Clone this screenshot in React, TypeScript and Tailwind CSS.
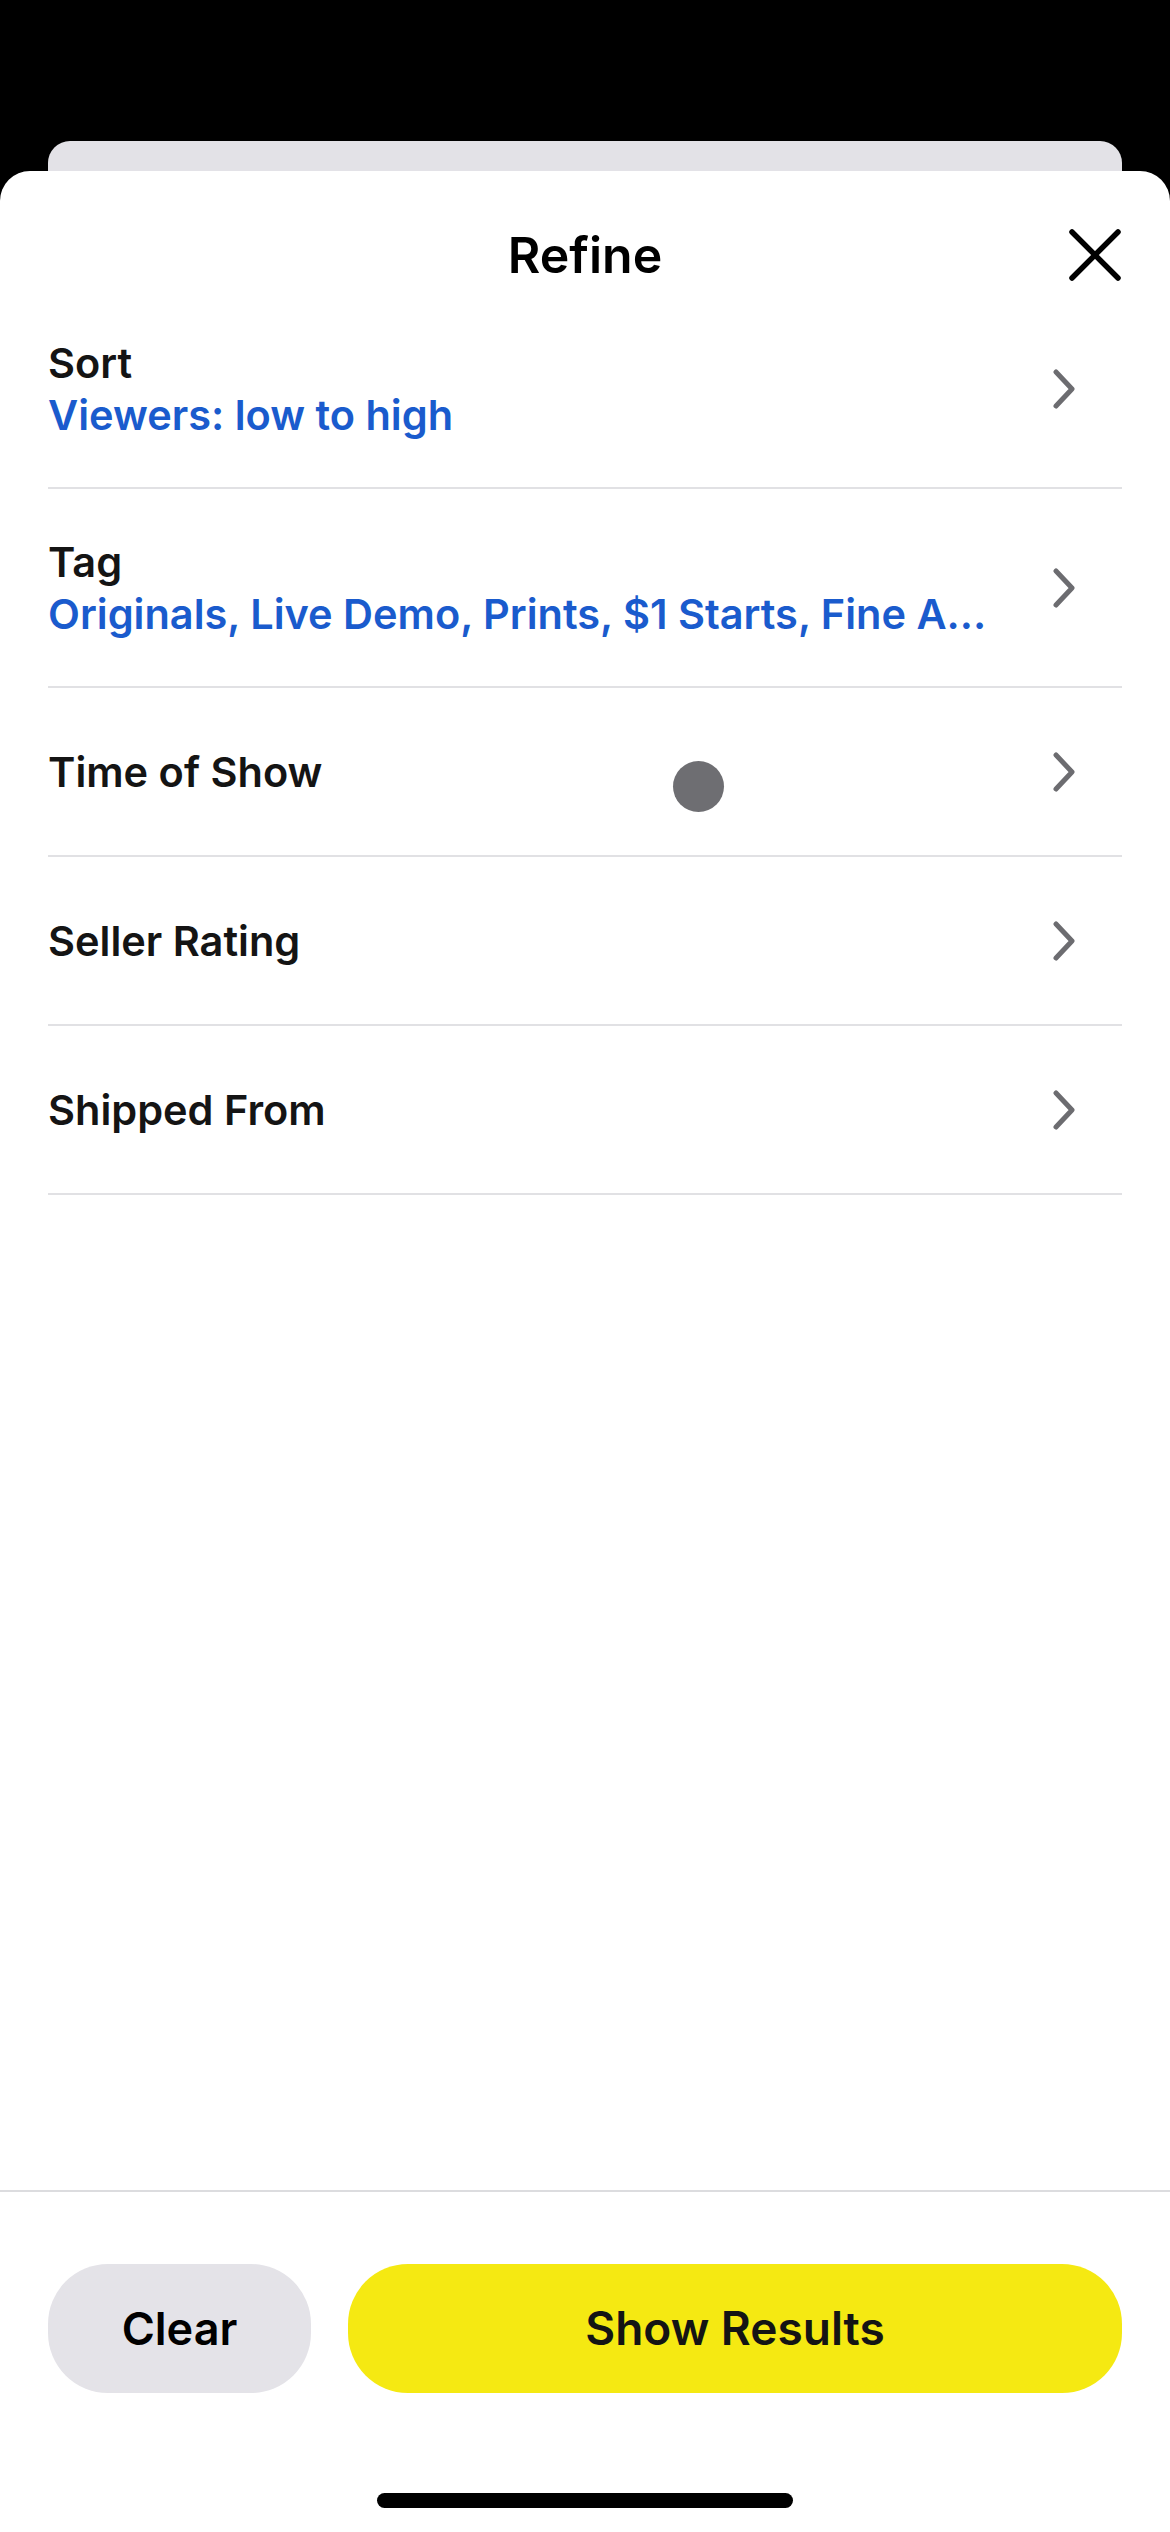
type Row = {
  title: string;
  value?: string;
};

const rows: Row[] = [
  { title: "Sort", value: "Viewers: low to high" },
  { title: "Tag", value: "Originals, Live Demo, Prints, $1 Starts, Fine A..." },
  { title: "Time of Show" },
  { title: "Seller Rating" },
  { title: "Shipped From" },
];

function Chevron() {
  return (
    <svg width="24" height="40" viewBox="0 0 24 40" fill="none" className="shrink-0">
      <path
        d="M4 3 L20 20 L4 37"
        stroke="#6c6c70"
        strokeWidth="5"
        strokeLinecap="round"
        strokeLinejoin="round"
      />
    </svg>
  );
}

function CloseIcon() {
  return (
    <svg width="52" height="52" viewBox="0 0 52 52" fill="none">
      <path
        d="M3 3 L49 49 M49 3 L3 49"
        stroke="#000"
        strokeWidth="5.5"
        strokeLinecap="round"
      />
    </svg>
  );
}

function FilterRow({ row }: { row: Row }) {
  return (
    <div
      className={`relative flex items-center justify-between border-b-2 border-[#e1e1e4] ${
        row.value ? "h-[199px]" : "h-[169px]"
      }`}
    >
      <div className="flex flex-col min-w-0 pr-6">
        <span className="text-[41.5px] leading-[52px] font-semibold text-[#141414]">
          {row.title}
        </span>
        {row.value && (
          <span className="text-[41.5px] leading-[52px] font-semibold text-[#1a5bcd] truncate">
            {row.value}
          </span>
        )}
      </div>
      <div className="mr-[46px]">
        <Chevron />
      </div>
      {row.title === "Time of Show" && (
        /* touch indicator */
        <div className="absolute left-[625px] top-[73px] w-[51px] h-[51px] rounded-full bg-[#6e6e72]" />
      )}
    </div>
  );
}

export default function App() {
  return (
    <div
      className="w-[1170px] h-[2532px] bg-black flex flex-col overflow-hidden"
      style={{ fontFamily: "Inter, 'Noto Sans', sans-serif" }}
    >
      <div className="h-[141px] shrink-0" />
      {/* card behind the sheet */}
      <div className="mx-[48px] h-[30px] shrink-0 rounded-t-[22px] bg-[#e3e2e7]" />

      <div className="flex-1 flex flex-col bg-white rounded-t-[30px]">
        {/* Header */}
        <div className="relative h-[119px] pt-[59px] flex justify-center">
          <h1 className="text-[50px] leading-[50px] font-semibold text-black">Refine</h1>
          <button className="absolute right-[49px] top-[58px]">
            <CloseIcon />
          </button>
        </div>

        {/* Filters */}
        <div className="px-[48px] flex flex-col">
          {rows.map((row) => (
            <FilterRow key={row.title} row={row} />
          ))}
        </div>

        <div className="flex-1" />

        {/* Footer */}
        <div className="border-t-2 border-[#dcdcdf] pt-[72px] flex flex-col">
          <div className="px-[48px] flex gap-[37px] h-[129px]">
            <button className="w-[263px] h-full rounded-[60px] bg-[#e4e3e8] text-[45px] font-semibold text-black">
              Clear
            </button>
            <button className="flex-1 h-full rounded-[60px] bg-[#f5e912] text-[46px] font-semibold text-[#141414]">
              Show Results
            </button>
          </div>
          <div className="h-[100px]" />
          <div className="mx-auto w-[416px] h-[15px] rounded-full bg-black" />
          <div className="h-[24px]" />
        </div>
      </div>
    </div>
  );
}
